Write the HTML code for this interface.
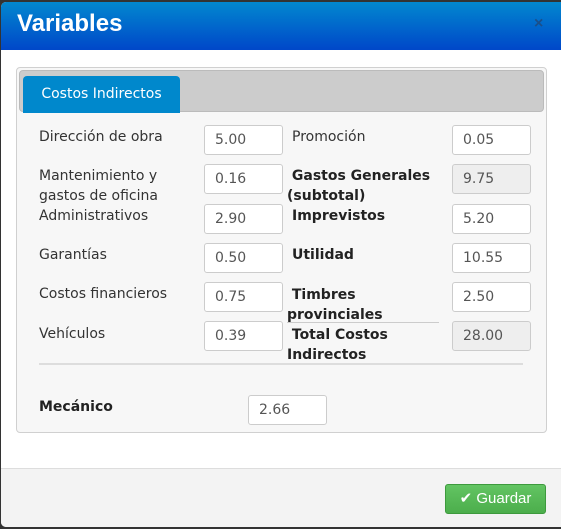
<!DOCTYPE html>
<html><head><meta charset="utf-8"><style>
*{box-sizing:border-box;margin:0;padding:0}
body{width:561px;height:529px;background:#333;position:relative;overflow:hidden;font-family:"DejaVu Sans",Verdana,sans-serif;font-size:14px;color:#333}
.modal{position:absolute;left:1px;top:2px;width:562px;height:525px;background:#fff;border-radius:5px 0 0 5px;overflow:hidden}
.hd{position:absolute;left:0;top:0;right:0;height:48px;background:linear-gradient(#0288cf,#0047c9)}
.hd h1{position:absolute;left:16px;top:8px;font:bold 24px "Liberation Sans",Arial,sans-serif;color:#fff}
.hd .x{position:absolute;left:533px;top:13px;font:bold 16px "Liberation Sans",sans-serif;color:#1a4f8a}
.panel{position:absolute;left:15px;top:65px;width:531px;height:366px;border:1px solid #d0d0d0;border-radius:4px;background:#f7f7f7}
.tabs{position:absolute;left:2px;top:2px;width:525px;height:42px;background:#ccc;border:1px solid #bbb;border-radius:4px}
.tab{position:absolute;left:3px;top:5px;width:157px;height:37px;background:#0088cc;border-radius:4px 4px 0 0;color:#fff;font-size:14px;line-height:37px;text-align:center}
.l{position:absolute;line-height:20px;white-space:nowrap}
.b{font-weight:bold;color:#222}
.i{position:absolute;width:79px;height:30px;border:1px solid #ccc;border-radius:3px;background:#fff;padding-left:10px;line-height:29px;font-size:14px;color:#555}
.g{background:#eee}
.ft{position:absolute;left:0;top:466px;right:0;height:60px;background:#f3f3f3;border-top:1px solid #ddd}
.btn{position:absolute;left:444px;top:15px;width:101px;height:30px;border:1px solid #3d9a3d;border-radius:3px;background:linear-gradient(#62c462,#4cae4c);color:#fff;font:15px "Liberation Sans",sans-serif;line-height:28px;text-align:center}
</style></head><body>
<div class="modal">
<div class="hd"><h1>Variables</h1><span class="x">×</span></div>
<div class="panel"><div class="tabs"><div class="tab">Costos Indirectos</div></div></div>
<div class="l" style="left:38px;top:125px">Dirección de obra</div>
<div class="l" style="left:38px;top:164px">Mantenimiento y<br>gastos de oficina</div>
<div class="l" style="left:38px;top:204px">Administrativos</div>
<div class="l" style="left:38px;top:243px">Garantías</div>
<div class="l" style="left:38px;top:282px">Costos financieros</div>
<div class="l" style="left:38px;top:322px">Vehículos</div>
<div class="i" style="left:203px;top:123px">5.00</div>
<div class="i" style="left:203px;top:162px">0.16</div>
<div class="i" style="left:203px;top:202px">2.90</div>
<div class="i" style="left:203px;top:241px">0.50</div>
<div class="i" style="left:203px;top:280px">0.75</div>
<div class="i" style="left:203px;top:319px">0.39</div>
<div class="l" style="left:291px;top:125px">Promoción</div>
<div class="l b" style="left:286px;top:164px">&nbsp;Gastos Generales<br>(subtotal)</div>
<div class="l b" style="left:291px;top:204px">Imprevistos</div>
<div class="l b" style="left:291px;top:243px">Utilidad</div>
<div class="l b" style="left:286px;top:283px">&nbsp;Timbres<br>provinciales</div>
<div style="position:absolute;left:286px;top:320px;width:152px;border-top:1px solid #ccc"></div>
<div class="l b" style="left:286px;top:323px">&nbsp;Total Costos<br>Indirectos</div>
<div class="i" style="left:451px;top:123px">0.05</div>
<div class="i g" style="left:451px;top:162px">9.75</div>
<div class="i" style="left:451px;top:202px">5.20</div>
<div class="i" style="left:451px;top:241px">10.55</div>
<div class="i" style="left:451px;top:280px">2.50</div>
<div class="i g" style="left:451px;top:319px">28.00</div>
<div style="position:absolute;left:38px;top:361px;width:484px;border-top:2px solid #ddd"></div>
<div class="l b" style="left:38px;top:395px">Mecánico</div>
<div class="i" style="left:247px;top:393px">2.66</div>
<div class="ft"><div class="btn">✔ Guardar</div></div>
</div>
</body></html>
